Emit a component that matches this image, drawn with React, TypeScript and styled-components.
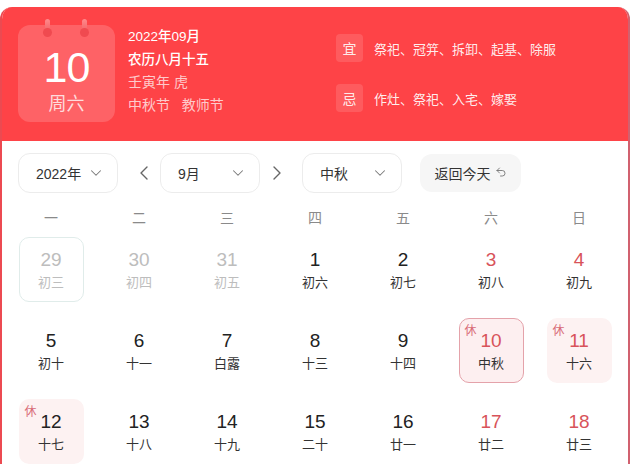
import React from "react";
import styled, { createGlobalStyle, css } from "styled-components";
import { ChevronDown, ChevronLeft, ChevronRight, Undo2 } from "lucide-react";

const GlobalStyle = createGlobalStyle`
  html, body { margin: 0; padding: 0; background: #fff; }
  body {
    font-family: "Liberation Sans", "Noto Sans CJK SC", sans-serif;
    color: #333;
  }
  * { box-sizing: border-box; }
  svg { flex-shrink: 0; }
`;

const Card = styled.div`
  margin-top: 7px;
  width: 630px;
  border-radius: 12px 12px 0 0;
  border-left: 2px solid #ec4a51;
  border-right: 2px solid #d1616f;
  overflow: hidden;
  background: #fff;
  min-height: 470px;
`;

const Header = styled.div`
  height: 134px;
  background: #fe4347;
  display: flex;
  padding: 18px 16px 0 16px;
`;

const DateBox = styled.div`
  position: relative;
  width: 97px;
  height: 97px;
  border-radius: 12px;
  background: rgba(255, 255, 255, 0.17);
  display: flex;
  flex-direction: column;
  align-items: center;
  color: #fff;
`;

const Ring = styled.span<{ $left: number }>`
  position: absolute;
  top: -6px;
  left: ${(p) => p.$left}px;
  width: 5px;
  height: 16px;
  border-radius: 3px;
  background: linear-gradient(#ff8a8c, #f0555a);
  &::after {
    content: "";
    position: absolute;
    left: -2px;
    bottom: -2px;
    width: 9px;
    height: 9px;
    border-radius: 50%;
    background: #f04a50;
  }
`;

const BigDay = styled.div`
  margin-top: 20px;
  font-size: 43px;
  line-height: 44px;
  font-weight: 400;
  letter-spacing: -1px;
`;

const WeekDay = styled.div`
  margin-top: 4px;
  font-size: 18px;
  line-height: 22px;
  color: rgba(255, 255, 255, 0.78);
`;

const Info = styled.div`
  width: 208px;
  margin-left: 13px;
  padding-top: 1px;
  display: flex;
  flex-direction: column;
`;

const InfoLine = styled.div<{ $dim?: boolean; $strong?: boolean }>`
  font-size: ${(p) => (p.$strong ? "13.5px" : "14px")};
  line-height: 22.7px;
  color: ${(p) => (p.$dim ? "rgba(255,255,255,0.72)" : "#fff")};
  font-weight: ${(p) => (p.$strong ? 500 : 400)};
  white-space: pre;
`;

const Almanac = styled.div`
  padding-top: 9px;
  display: flex;
  flex-direction: column;
  gap: 22px;
`;

const AlmanacRow = styled.div`
  display: flex;
  align-items: center;
  gap: 11px;
`;

const Badge = styled.span`
  width: 27px;
  height: 28px;
  border-radius: 4px;
  background: rgba(255, 255, 255, 0.13);
  color: rgba(255, 255, 255, 0.9);
  font-size: 14px;
  display: flex;
  align-items: center;
  justify-content: center;
`;

const AlmanacText = styled.span`
  color: rgba(255, 255, 255, 0.92);
  font-size: 13px;
`;

const Toolbar = styled.div`
  display: flex;
  align-items: center;
  padding: 12px 16px 0 16px;
  height: 52px;
`;

const Select = styled.div`
  width: 100px;
  height: 40px;
  border: 1px solid #ececec;
  border-radius: 12px;
  display: flex;
  align-items: center;
  justify-content: space-between;
  padding: 0 12px 0 17px;
  font-size: 14px;
  color: #333;
  svg { color: #777; }
`;

const Arrow = styled.span<{ $side: "l" | "r" }>`
  width: 24px;
  display: flex;
  justify-content: center;
  color: #666;
  ${(p) =>
    p.$side === "l"
      ? css`margin: 0 4px 0 14px;`
      : css`margin: 0 13px 0 5px;`}
`;

const TodayButton = styled.div`
  margin-left: 18px;
  height: 38px;
  width: 101px;
  border-radius: 12px;
  background: #f6f6f6;
  display: flex;
  align-items: center;
  justify-content: center;
  gap: 4px;
  font-size: 14px;
  color: #333;
  svg { color: #666; margin-top: -2px; }
`;

const Weekdays = styled.div`
  display: grid;
  grid-template-columns: repeat(7, 88px);
  padding: 0 5px;
  margin-top: 12px;
  height: 24px;
  align-items: center;
`;

const WeekLabel = styled.span`
  text-align: center;
  font-size: 14px;
  color: #8a8a8a;
`;

const Grid = styled.div`
  display: grid;
  grid-template-columns: repeat(7, 88px);
  row-gap: 16px;
  padding: 0 5px;
  margin-top: 8px;
`;

type Variant = "muted" | "normal" | "selected" | "holiday";

const Cell = styled.div<{ $variant: Variant; $ring?: boolean }>`
  position: relative;
  justify-self: center;
  width: 65px;
  height: 65px;
  border-radius: 10px;
  display: flex;
  flex-direction: column;
  align-items: center;
  padding-top: 11px;
  border: 1.5px solid transparent;
  ${(p) =>
    p.$ring &&
    css`
      border-color: #e0ecea;
    `}
  ${(p) =>
    p.$variant === "selected" &&
    css`
      border-color: #e4a2aa;
      background: #fdeff0;
    `}
  ${(p) =>
    p.$variant === "holiday" &&
    css`
      background: #fdf2f2;
    `}
`;

const DayNum = styled.span<{ $muted?: boolean; $red?: boolean }>`
  font-size: 19px;
  line-height: 22px;
  color: ${(p) => (p.$muted ? "#bdbdbd" : p.$red ? "#d8535a" : "#222")};
`;

const Lunar = styled.span<{ $muted?: boolean }>`
  margin-top: 3px;
  font-size: 13px;
  line-height: 18px;
  color: ${(p) => (p.$muted ? "#bdbdbd" : "#333")};
`;

const Rest = styled.span`
  position: absolute;
  top: 5px;
  left: 5px;
  font-size: 12px;
  line-height: 14px;
  color: #d86a76;
`;

type Day = { n: number; l: string; v: Variant; red?: boolean; ring?: boolean; rest?: boolean };

const days: Day[] = [
  { n: 29, l: "初三", v: "muted", ring: true },
  { n: 30, l: "初四", v: "muted" },
  { n: 31, l: "初五", v: "muted" },
  { n: 1, l: "初六", v: "normal" },
  { n: 2, l: "初七", v: "normal" },
  { n: 3, l: "初八", v: "normal", red: true },
  { n: 4, l: "初九", v: "normal", red: true },
  { n: 5, l: "初十", v: "normal" },
  { n: 6, l: "十一", v: "normal" },
  { n: 7, l: "白露", v: "normal" },
  { n: 8, l: "十三", v: "normal" },
  { n: 9, l: "十四", v: "normal" },
  { n: 10, l: "中秋", v: "selected", red: true, rest: true },
  { n: 11, l: "十六", v: "holiday", red: true, rest: true },
  { n: 12, l: "十七", v: "holiday", rest: true },
  { n: 13, l: "十八", v: "normal" },
  { n: 14, l: "十九", v: "normal" },
  { n: 15, l: "二十", v: "normal" },
  { n: 16, l: "廿一", v: "normal" },
  { n: 17, l: "廿二", v: "normal", red: true },
  { n: 18, l: "廿三", v: "normal", red: true },
];

const weekLabels = ["一", "二", "三", "四", "五", "六", "日"];

export default function App() {
  return (
    <>
      <GlobalStyle />
      <Card>
        <Header>
          <DateBox>
            <Ring $left={27} />
            <Ring $left={64} />
            <BigDay>10</BigDay>
            <WeekDay>周六</WeekDay>
          </DateBox>
          <Info>
            <InfoLine $strong>2022年09月</InfoLine>
            <InfoLine $strong>农历八月十五</InfoLine>
            <InfoLine $dim>壬寅年 虎</InfoLine>
            <InfoLine $dim>{"中秋节   教师节"}</InfoLine>
          </Info>
          <Almanac>
            <AlmanacRow>
              <Badge>宜</Badge>
              <AlmanacText>祭祀、冠笄、拆卸、起基、除服</AlmanacText>
            </AlmanacRow>
            <AlmanacRow>
              <Badge>忌</Badge>
              <AlmanacText>作灶、祭祀、入宅、嫁娶</AlmanacText>
            </AlmanacRow>
          </Almanac>
        </Header>
        <Toolbar>
          <Select>
            <span>2022年</span>
            <ChevronDown size={18} strokeWidth={1.4} />
          </Select>
          <Arrow $side="l">
            <ChevronLeft size={24} strokeWidth={1.4} />
          </Arrow>
          <Select>
            <span>9月</span>
            <ChevronDown size={18} strokeWidth={1.4} />
          </Select>
          <Arrow $side="r">
            <ChevronRight size={24} strokeWidth={1.4} />
          </Arrow>
          <Select>
            <span>中秋</span>
            <ChevronDown size={18} strokeWidth={1.4} />
          </Select>
          <TodayButton>
            <span>返回今天</span>
            <Undo2 size={12} strokeWidth={1.6} />
          </TodayButton>
        </Toolbar>
        <Weekdays>
          {weekLabels.map((w) => (
            <WeekLabel key={w}>{w}</WeekLabel>
          ))}
        </Weekdays>
        <Grid>
          {days.map((d) => (
            <Cell key={d.n} $variant={d.v} $ring={d.ring}>
              {d.rest && <Rest>休</Rest>}
              <DayNum $muted={d.v === "muted"} $red={d.red}>
                {d.n}
              </DayNum>
              <Lunar $muted={d.v === "muted"}>{d.l}</Lunar>
            </Cell>
          ))}
        </Grid>
      </Card>
    </>
  );
}
